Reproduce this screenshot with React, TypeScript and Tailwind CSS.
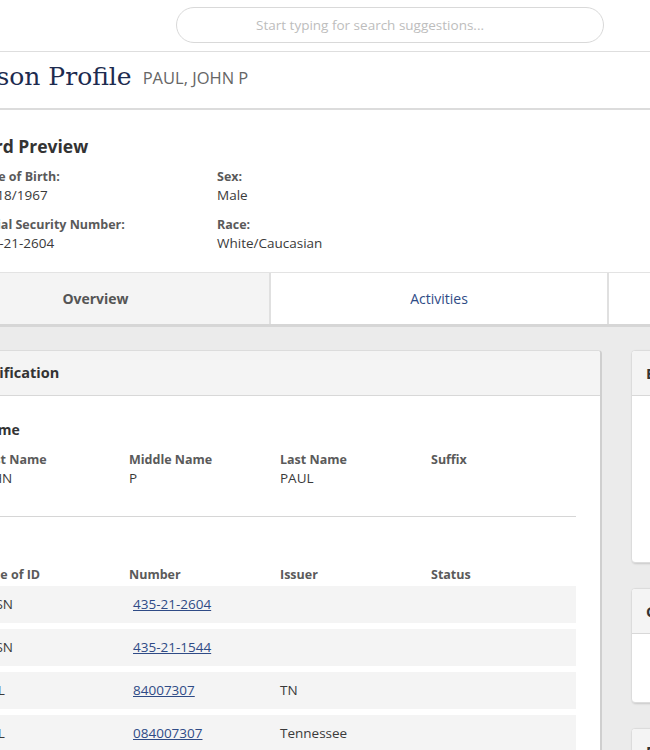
const sans = { fontFamily: '"Open Sans", "Liberation Sans", sans-serif' }

const idRows = [
  { type: 'SSN', number: '435-21-2604', issuer: '', status: '' },
  { type: 'SSN', number: '435-21-1544', issuer: '', status: '' },
  { type: 'DL', number: '84007307', issuer: 'TN', status: '' },
  { type: 'DL', number: '084007307', issuer: 'Tennessee', status: '' },
]

function Field({ label, value }: { label: string; value: string }) {
  return (
    <div>
      <div className="text-[12.5px] font-bold leading-[18px] text-[#5a5a5a]">{label}</div>
      <div className="text-[13.5px] leading-[19px] text-[#3a3a3a]">{value}</div>
    </div>
  )
}

function SideCard({ title, height }: { title: string; height: string }) {
  return (
    <div className={`${height} overflow-hidden rounded-[4px] border border-[#dcdcdc] bg-white shadow-[1px_1px_2px_rgba(0,0,0,0.15)]`}>
      <div className="flex h-[45px] items-center border-b border-[#d8d8d8] bg-[#f4f4f4] pl-[14px] text-[15px] font-bold text-[#333]">
        {title}
      </div>
    </div>
  )
}

export default function App() {
  return (
    <div className="h-[750px] w-[650px] overflow-hidden bg-[#ebebeb]" style={sans}>
      <div className="-ml-[80px] w-[840px]">
        {/* top bar */}
        <div className="h-[52px] border-b border-[#dedede] bg-white pt-[7px]">
          <div className="ml-[256px] flex h-[36px] w-[428px] items-center justify-center rounded-full border border-[#d9d9d9] pr-[40px] text-[13.5px] text-[#bdbdbd]">
            Start typing for search suggestions...
          </div>
        </div>

        {/* title */}
        <div className="flex h-[58px] items-center border-b-2 border-[#dcdcdc] bg-white pl-[34px]">
          <h1
            className="-mt-[7px] text-[25px] leading-none text-[#1d2b4f]"
            style={{ fontFamily: '"DejaVu Serif", "Liberation Serif", serif' }}
          >
            Person Profile
          </h1>
          <span className="-mt-[3px] ml-[11px] text-[16.5px] text-[#666]">PAUL, JOHN P</span>
        </div>

        {/* record preview */}
        <div className="h-[162px] bg-white pl-[56px] pt-[25px]">
          <div className="-ml-[23px] text-[17.5px] font-bold leading-[22px] text-[#333]">Record Preview</div>
          <div className="mt-[11px] grid grid-cols-[241px_243px] gap-y-[11px]">
            <Field label="Date of Birth:" value="05/18/1967" />
            <Field label="Sex:" value="Male" />
            <Field label="Social Security Number:" value="435-21-2604" />
            <Field label="Race:" value="White/Caucasian" />
          </div>
        </div>

        {/* tabs */}
        <div className="flex h-[55px] border-y border-[#e3e3e3] border-b-[3px] border-b-[#d6d6d6] bg-white">
          <div className="flex w-[349px] items-center justify-center bg-[#f4f4f4] pl-[2px] text-[14px] font-bold text-[#555]">
            Overview
          </div>
          <div className="flex w-[340px] items-center justify-center border-x-2 border-[#e0e0e0] text-[14px] text-[#2f4b86]">
            Activities
          </div>
          <div className="flex flex-1 items-center justify-center text-[14px] text-[#2f4b86]">Notes</div>
        </div>

        {/* content */}
        <div className="flex gap-[29px] pl-[30px] pt-[23px]">
          <div className="w-[652px] shrink-0 overflow-hidden rounded-[4px] border border-[#dcdcdc] border-r-2 border-r-[#cfcfcf] bg-white">
            <div className="flex h-[45px] items-center border-b border-[#d8d8d8] bg-[#f4f4f4] pl-[10px] text-[14.5px] font-bold text-[#333]">
              Identification
            </div>
            <div className="pl-[27px] pr-[24px] pt-[24px]">
              <div className="text-[14px] font-bold leading-[20px] text-[#333]">Name</div>
              <div className="mt-[11px] grid grid-cols-[151px_151px_151px_151px]">
                <Field label="First Name" value="JOHN" />
                <Field label="Middle Name" value="P" />
                <Field label="Last Name" value="PAUL" />
                <Field label="Suffix" value="" />
              </div>
              <div className="mt-[28px] h-px bg-[#d6d6d6]" />
              <div className="mt-[19px] text-[14px] font-bold leading-[20px] text-[#333]">ID</div>
              <div className="mt-[10px] grid grid-cols-[151px_151px_151px_151px] text-[12.5px] font-bold leading-[18px] text-[#5a5a5a]">
                <div>Type of ID</div>
                <div>Number</div>
                <div>Issuer</div>
                <div>Status</div>
              </div>
              <div className="mt-[2px] flex flex-col gap-[6px]">
                {idRows.map((row) => (
                  <div
                    key={row.number}
                    className="grid h-[37px] grid-cols-[151px_151px_151px_1fr] items-center bg-[#f4f4f4] text-[13.5px] text-[#3a3a3a]"
                  >
                    <div className="pl-[10px]">{row.type}</div>
                    <div className="pl-[4px]">
                      <a href="#" className="text-[#2f4b86] underline">
                        {row.number}
                      </a>
                    </div>
                    <div>{row.issuer}</div>
                    <div>{row.status}</div>
                  </div>
                ))}
              </div>
            </div>
          </div>

          <div className="flex w-[300px] flex-col gap-[25px]">
            <SideCard title="Bookings" height="h-[213px]" />
            <SideCard title="Contacts" height="h-[115px]" />
            <SideCard title="Photos" height="h-[120px]" />
          </div>
        </div>
      </div>
    </div>
  )
}
